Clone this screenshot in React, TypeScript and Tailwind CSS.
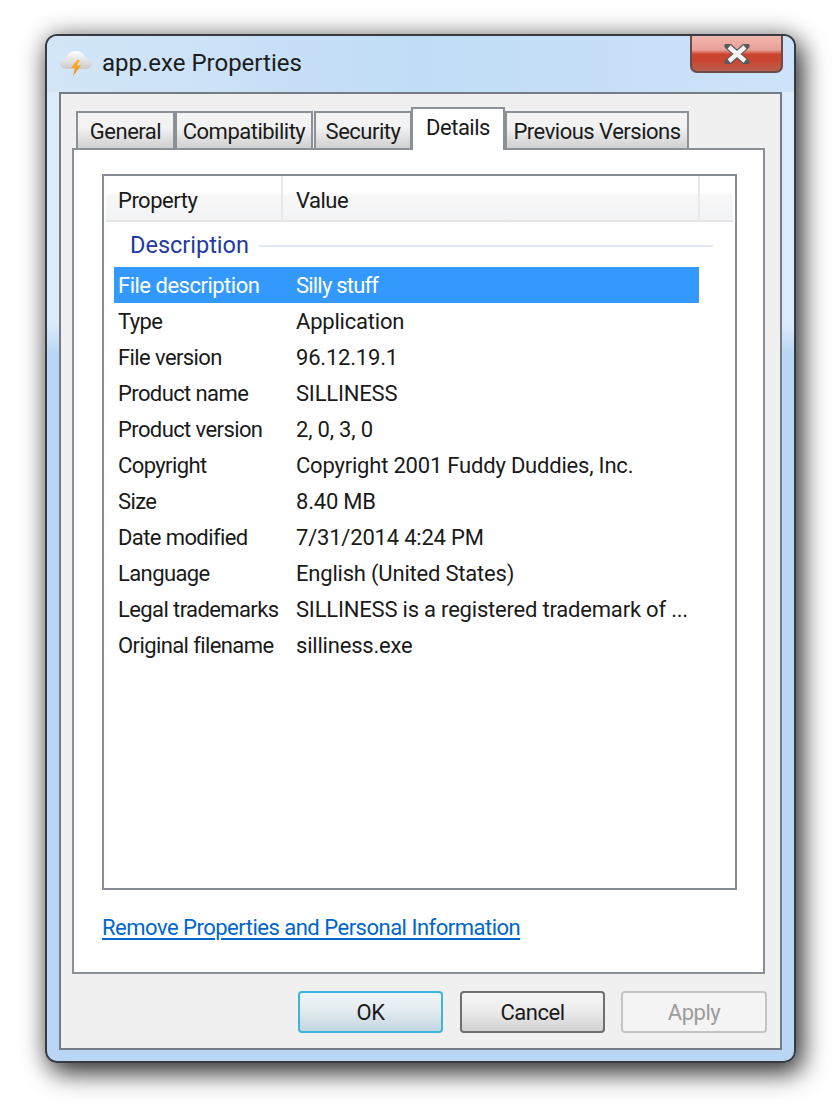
const rows: [string, string][] = [
  ["Type", "Application"],
  ["File version", "96.12.19.1"],
  ["Product name", "SILLINESS"],
  ["Product version", "2, 0, 3, 0"],
  ["Copyright", "Copyright 2001 Fuddy Duddies, Inc."],
  ["Size", "8.40 MB"],
  ["Date modified", "7/31/2014 4:24 PM"],
  ["Language", "English (United States)"],
  ["Legal trademarks", "SILLINESS is a registered trademark of ..."],
  ["Original filename", "silliness.exe"],
];

const CloudIcon = () => (
  <svg width="34" height="28" viewBox="0 0 34 28" className="shrink-0">
    <defs>
      <linearGradient id="cloud" x1="0" y1="0" x2="0" y2="1">
        <stop offset="0" stopColor="#ffffff" />
        <stop offset="1" stopColor="#c9c9c9" />
      </linearGradient>
      <linearGradient id="bolt" x1="0" y1="0" x2="0" y2="1">
        <stop offset="0" stopColor="#ffb52e" />
        <stop offset="1" stopColor="#f08a12" />
      </linearGradient>
    </defs>
    <path
      d="M8 20C3 20 1 17 1 14.500C1 11.500 4 9.500 7 10C8 5 12 2 17 2C22 2 25 5 26 9C30 9 33 11.500 33 14.500C33 18 30 20 26 20Z"
      fill="url(#cloud)"
    />
    <path d="M18 11L12 19L16 19L14 27L22 16.500L18 16.500L21 11Z" fill="url(#bolt)" />
  </svg>
);

const Tab = ({ label, active, width }: { label: string; active?: boolean; width: string }) =>
  active ? (
    <div
      className={`${width} relative z-10 -mb-[2px] flex h-[43px] items-center justify-center border-2 border-b-0 border-[#8b9097] bg-white pb-[5px] text-[#1a1a1a]`}
    >
      {label}
    </div>
  ) : (
    <div
      className={`${width} mt-[4px] flex h-[37px] items-center justify-center border-2 border-b-0 border-[#8b9097] bg-gradient-to-b from-[#f3f3f3] from-40% to-[#d0d0d0] pt-[1px] text-[#1a1a1a]`}
    >
      {label}
    </div>
  );

const DialogButton = ({ label, className }: { label: string; className: string }) => (
  <button className={`flex h-[42px] items-center justify-center rounded-[4px] border-2 ${className}`}>
    {label}
  </button>
);

export default function App() {
  return (
    <div className="h-[1108px] w-[837px] overflow-hidden bg-white pl-[45px] pt-[34px] font-['Roboto',sans-serif] text-[22px] tracking-[-0.5px] text-[#1a1a1a]">
      {/* window frame */}
      <div className="relative h-[1029px] w-[751px] rounded-[12px] border-2 border-[#383c42] bg-gradient-to-b from-[#dcebfa] from-[28%] to-[#b9d7f4] to-[31%] shadow-[6px_10px_26px_rgba(0,0,0,0.75),0_0_24px_rgba(0,0,0,0.3)]">
        <div className="flex h-[56px] items-start justify-between rounded-t-[10px] bg-gradient-to-r from-[#d3e6f8] via-[#c0dcf6] to-[#cde3f9]">
          <div className="flex items-center pl-[12px] pt-[11px] text-[24px] leading-[32px] tracking-normal text-[#1c1c1c]">
            <CloudIcon />
            <span className="ml-[9px]">app.exe Properties</span>
          </div>
          <div className="mr-[11px] flex h-[37px] w-[93px] items-center justify-center rounded-b-[7px] border-2 border-t-0 border-[#6b4a48] bg-[linear-gradient(to_bottom,#f0b5ae_0%,#e8a097_40%,#cc442e_52%,#c9442f_70%,#b9614f_100%)]">
            <svg width="26" height="20" viewBox="0 0 26 20">
              <path
                d="M4 2L22 18M22 2L4 18"
                stroke="#5a5a5a"
                strokeWidth="7"
                strokeLinecap="round"
                fill="none"
              />
              <path d="M5 3L21 17M21 3L5 17" stroke="#f4f4f4" strokeWidth="4.500" fill="none" />
            </svg>
          </div>
        </div>

        {/* dialog client area */}
        <div className="mx-[12px] flex h-[958px] flex-col border-2 border-[#767c85] bg-[#f0f0f0]">
          <div className="mt-[13px] flex pl-[15px]">
            <Tab label="General" width="w-[99px]" />
            <Tab label="Compatibility" width="w-[138px]" />
            <Tab label="Security" width="ml-[1px] w-[98px]" />
            <Tab label="Details" active width="-ml-px w-[94px]" />
            <Tab label="Previous Versions" width="w-[184px]" />
          </div>

          <div className="ml-[11px] flex h-[826px] w-[693px] flex-col border-2 border-[#8b9097] bg-white">
            {/* details list */}
            <div className="ml-[28px] mt-[24px] h-[716px] w-[635px] border-2 border-[#868b94] p-[2px] pt-0">
              <div className="flex h-[46px] items-center border-b-2 border-[#e5e5e5] bg-gradient-to-b from-white from-[41%] via-[#f8f8f9] via-[41%] to-[#f2f3f4]">
                <div className="flex h-full w-[177px] items-center border-r-2 border-[#e8e8e8] pl-[12px] pt-[4px]">
                  Property
                </div>
                <div className="flex h-full w-[417px] items-center border-r-2 border-[#e8e8e8] pl-[13px] pt-[4px]">
                  Value
                </div>
              </div>

              <div className="ml-[24px] mr-[20px] mt-[8px] flex h-[32px] items-center">
                <span className="text-[23.500px] tracking-normal text-[#1f3aa3]">Description</span>
                <span className="ml-[10px] h-[2px] flex-1 bg-[#e3e7f5]" />
              </div>

              <div className="ml-[8px] mt-[5px] w-[585px]">
                <div className="flex h-[36px] items-center bg-[#3399ff] pl-[4px] text-white">
                  <span className="w-[178px]">File description</span>
                  <span className="tracking-[-0.8px]">Silly stuff</span>
                </div>
                {rows.map(([name, value]) => (
                  <div key={name} className="flex h-[36px] items-center whitespace-nowrap pl-[4px]">
                    <span className="w-[178px] tracking-[-0.6px]">{name}</span>
                    <span className="tracking-[-0.2px]">{value}</span>
                  </div>
                ))}
              </div>
            </div>

            <a className="ml-[28px] mt-[23px] w-fit leading-[30px] text-[#0066cc] underline underline-offset-[3px]">
              Remove Properties and Personal Information
            </a>
          </div>

          <div className="mr-[13px] mt-[17px] flex justify-end">
            <DialogButton
              label="OK"
              className="w-[145px] border-[#3cb4e0] bg-gradient-to-b from-[#f0f5f8] via-[#e4ecf1] via-45% to-[#c4d5e0]"
            />
            <DialogButton
              label="Cancel"
              className="ml-[17px] w-[145px] border-[#6f6f6f] bg-gradient-to-b from-[#f5f5f5] via-[#ececec] via-45% to-[#d2d2d2]"
            />
            <DialogButton
              label="Apply"
              className="ml-[16px] w-[146px] border-[#c4c4c4] bg-[#f4f4f4] text-[#9c9c9c]"
            />
          </div>
        </div>
      </div>
    </div>
  );
}
